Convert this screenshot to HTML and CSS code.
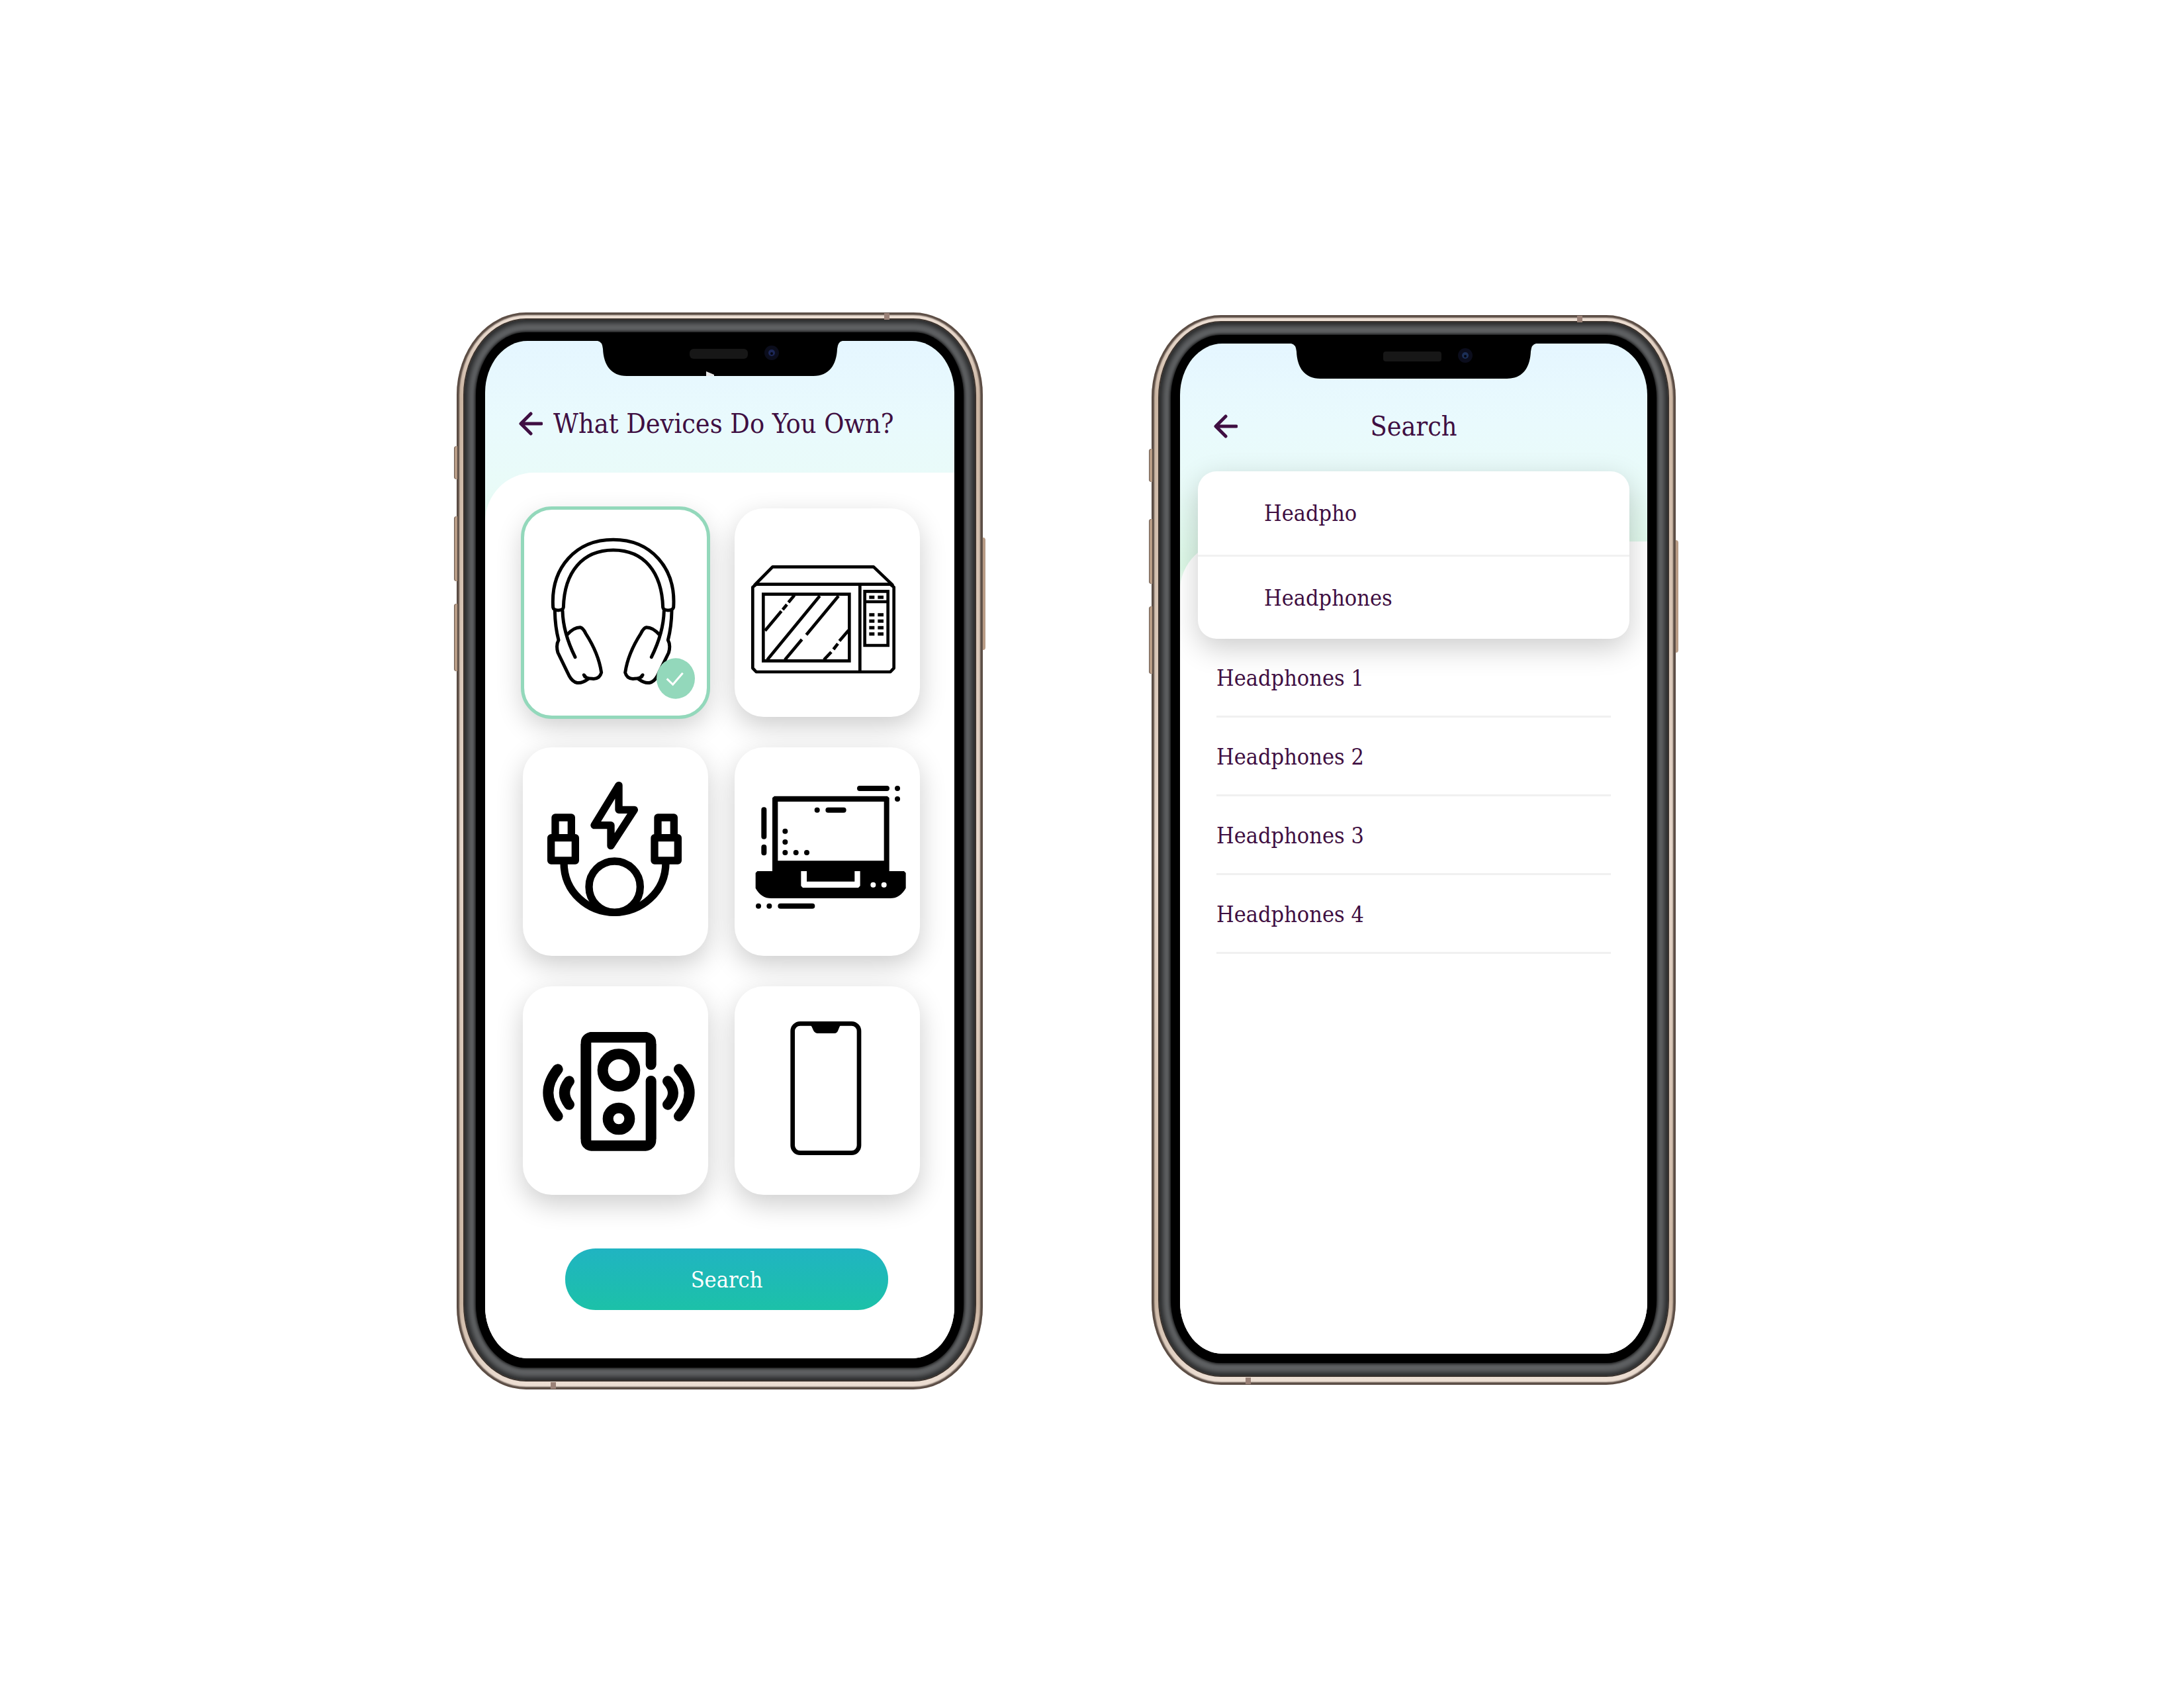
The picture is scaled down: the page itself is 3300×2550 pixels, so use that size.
FILE: index.html
```html
<!DOCTYPE html>
<html lang="en">
<head>
<meta charset="utf-8">
<meta name="viewport" content="width=device-width, initial-scale=1">
<title>Devices</title>
<link rel="stylesheet" href="styles.css">
</head>
<body>
<main class="stage">
  <section class="phone phone-devices">
    <span class="key key-mute"></span><span class="key key-up"></span><span class="key key-down"></span><span class="key key-power"></span>
    <span class="seam seam-top"></span><span class="seam seam-bottom"></span>
    <div class="rim"><div class="bezel"><div class="screen">
      <svg class="notch" viewBox="0 0 370 53" aria-hidden="true">
        <path d="M0 0Q7 1 8 12C9 36 20 53 44 53H326C350 53 361 36 362 12Q363 1 370 0Z"/>
        <rect x="139" y="12" width="88" height="15" rx="6" fill="#171717"/>
        <circle cx="263" cy="18" r="11" fill="#0b0d1c"/><circle cx="263" cy="18" r="5" fill="#1c2757"/><circle cx="263" cy="19" r="2" fill="#05060f"/>
        <path d="M164 46L176 51V53H164Z" fill="#e8e8e8"/>
      </svg>
      <header class="bar">
        <button class="back" type="button" aria-label="Back"><svg viewBox="0 0 36 36"><path d="M18 3L3 18L18 33M4 18H34"/></svg></button>
        <h1 class="title">What Devices Do You Own?</h1>
      </header>
      <div class="panel panel-devices">
        <div class="tiles">
          <button class="tile selected" type="button" aria-pressed="true" aria-label="Headphones">
            <svg viewBox="60 51 840 945">
              <g class="line" stroke-width="15">
                <path d="M197 500C185 320 300 193 470 193C640 193 755 320 743 500Q740 512 718 513Q697 512 695 500C690 340 610 240 470 240C330 240 248 340 244 500Q242 512 220 513Q199 512 197 500Z"/>
                <g id="cup"><path d="M205 515C206 570 212 610 222 648Q209 670 219 705L270 810Q300 865 355 825M240 515C241 560 250 630 297 725M260 624Q290 590 320 590Q333 592 345 618C385 680 408 740 416 795Q408 826 375 823Q342 822 337 806L353 825"/></g>
                <use href="#cup" transform="translate(940 0) scale(-1 1)"/>
              </g>
              <ellipse cx="753" cy="822" rx="87" ry="92" fill="#93d8bb"/>
              <path d="M713 823L740 849L785 797" fill="none" stroke="#fff" stroke-width="9"/>
            </svg>
          </button>
          <button class="tile" type="button" aria-pressed="false" aria-label="Microwave">
            <svg viewBox="60 51 840 945">
              <g class="line" stroke-width="14">
                <path d="M152 397L232 316H690L775 397"/>
                <path d="M158 395H766L782 408V775L766 792H158L142 775V408ZM628 395V792"/>
                <path stroke-linejoin="miter" d="M190 440H580V742H190ZM650 427H755V672H650ZM650 474H755"/>
                <path stroke-linecap="butt" d="M198 605L272 517M278 510L297 487M304 477L331 445M208 737L446 448M385 624L531 448M288 737L365 645M465 737L498 702M508 690L528 664M535 652L577 603"/>
              </g>
              <path d="M670 454H694M709 454H735M670 533H694M709 533H735M670 562H694M709 562H735M670 592H694M709 592H735M670 620H694M709 620H735" fill="none" stroke="#000" stroke-width="15"/>
            </svg>
          </button>
          <button class="tile" type="button" aria-pressed="false" aria-label="Charging cable">
            <svg viewBox="60 54 840 945">
              <g class="line" stroke-width="34">
                <path d="M495 226L384 407H459V500L565 337H495Z"/>
                <path d="M207 372H280V464H207ZM188 464H298V567H188ZM672 372H745V464H672ZM657 464H763V567H657Z"/>
                <circle cx="476" cy="686" r="116"/>
                <path stroke-linecap="butt" d="M246 575C246 712 358 802 476 802S708 712 708 575"/>
              </g>
            </svg>
          </button>
          <button class="tile" type="button" aria-pressed="false" aria-label="Laptop">
            <svg viewBox="60 54 840 945">
              <path fill-rule="evenodd" d="M240 275H752L761 283V615H828L836 623V692Q810 738 765 738H226Q180 738 155 692V623L163 615H231V283ZM256 300V568H737V300ZM361 615V682L369 690H621L629 682V615H604V662H387V615Z"/>
              <g class="line" stroke-width="24">
                <path d="M627 240H750M193 337V458M193 506V532M268 773H412M484 338H554"/>
                <path d="M798 240H798.1M798 288H798.1M434 338H434.1M289 434H289.1M289 483H289.1M289 531H289.1M338 531H338.1M387 531H387.1M168 773H168.1M217 773H217.1"/>
                <path stroke="#fff" d="M688 677H688.1M737 677H737.1"/>
              </g>
            </svg>
          </button>
          <button class="tile" type="button" aria-pressed="false" aria-label="Speaker">
            <svg viewBox="60 57 840 945">
              <g class="line" stroke-width="48">
                <path stroke-linejoin="miter" d="M641 412V288H346V779H641V486"/>
                <circle cx="495" cy="437" r="73"/><circle cx="495" cy="657" r="49"/>
                <path d="M218 433Q132 540 218 645M270 487Q228 540 270 593M768 433Q862 540 768 645M717 487Q765 540 717 593"/>
              </g>
              <path fill="#fff" d="M320 262H375Q322 270 322 318H320ZM667 262H612Q665 270 665 318H667ZM320 805H375Q322 797 322 749H320ZM667 805H612Q665 797 665 749H667Z"/>
            </svg>
          </button>
          <button class="tile" type="button" aria-pressed="false" aria-label="Phone">
            <svg viewBox="60 57 840 945">
              <rect class="line" x="323" y="226" width="301" height="586" rx="34" stroke-width="20"/>
              <path d="M403 230H542Q534 240 530 254Q525 270 512 270H434Q420 268 414 250Q411 240 403 232Z"/>
            </svg>
          </button>
        </div>
        <button class="search" type="button">Search</button>
      </div>
    </div></div></div>
  </section>

  <section class="phone phone-search">
    <span class="key key-mute"></span><span class="key key-up"></span><span class="key key-down"></span><span class="key key-power"></span>
    <span class="seam seam-top"></span><span class="seam seam-bottom"></span>
    <div class="rim"><div class="bezel"><div class="screen">
      <svg class="notch" viewBox="0 0 370 53" aria-hidden="true">
        <path d="M0 0Q7 1 8 12C9 36 20 53 44 53H326C350 53 361 36 362 12Q363 1 370 0Z"/>
        <rect x="139" y="12" width="88" height="15" rx="4" fill="#171717"/>
        <circle cx="263" cy="18" r="11" fill="#0b0d1c"/><circle cx="263" cy="18" r="5" fill="#1c2f57"/><circle cx="263" cy="19" r="2" fill="#05060f"/>
      </svg>
      <header class="bar">
        <button class="back" type="button" aria-label="Back"><svg viewBox="0 0 36 36"><path d="M18 3L3 18L18 33M4 18H34"/></svg></button>
        <h1 class="title">Search</h1>
      </header>
      <div class="panel panel-search">
        <form class="lookup">
          <input class="query" type="text" value="Headpho" aria-label="Search devices">
          <button class="hint" type="button">Headphones</button>
        </form>
        <ul class="results">
          <li><a href="#">Headphones 1</a></li>
          <li><a href="#">Headphones 2</a></li>
          <li><a href="#">Headphones 3</a></li>
          <li><a href="#">Headphones 4</a></li>
        </ul>
      </div>
    </div></div></div>
  </section>
</main>
</body>
</html>
```
FILE: styles.css
```css
:root {
  --ink: #3f0f42;
  --mint: #93d8bb;
  --body-size: 34px;
  --title-size: 41px;
}

* {
  box-sizing: border-box;
}

body {
  margin: 0;
  background: #fff;
  color: var(--ink);
  font-family: "DejaVu Serif Condensed", "DejaVu Serif", serif;
  font-size: var(--body-size);
  line-height: 44px;
}

button,
input {
  margin: 0;
  padding: 0;
  border: 0;
  background: none;
  color: inherit;
  font: inherit;
}

.stage {
  display: grid;
  grid-template-columns: 690fr 795fr 255fr 792fr 768fr;
  align-items: start;
  padding: 472px 0;
}

/* Handset frame: gold edge, grey rim, black bezel */
.phone {
  position: relative;
  padding: 11px 12px 14px;
  border-radius: 105px / 125px;
  background: linear-gradient(#efe1d6, #cbb5a2 8%, #e6d6ca 50%, #cbb5a2 92%, #efe1d6);
  box-shadow: inset 0 0 2px 4px #5a4c44;
}

.phone-devices {
  grid-column: 2;
}

.phone-search {
  grid-column: 4;
  margin-top: 4px;
}

.rim {
  padding: 19px 17px 19px;
  border-radius: 93px / 114px;
  background: #606264;
  box-shadow: inset 0 0 7px 5px #2a2b2c, 0 0 0 2px #3a322d;
}

.bezel {
  padding: 13px 14px 14px;
  border-radius: 76px / 96px;
  background: #000;
  box-shadow: 0 0 5px 1px #000;
}

.screen {
  position: relative;
  display: flex;
  flex-direction: column;
  overflow: hidden;
  border-radius: 64px / 78px;
  background: linear-gradient(#e5f6ff 0, #e9fafd 120px, #e9fbf8 220px, #dcf8e6 340px, #fff 380px);
}

.phone-search .screen {
  aspect-ratio: 706 / 1526;
}

.notch {
  position: absolute;
  top: 0;
  left: calc(50% - 185px);
  width: 370px;
}

.key {
  position: absolute;
  left: -4px;
  width: 5px;
  border-radius: 4px 0 0 4px;
  background: #b89c86;
  box-shadow: inset 1px 0 0 #6a5a50;
}

.key-mute {
  top: 202px;
  height: 50px;
}

.key-up {
  top: 308px;
  height: 98px;
}

.key-down {
  top: 440px;
  height: 102px;
}

.key-power {
  top: 340px;
  right: -4px;
  left: auto;
  height: 170px;
  border-radius: 0 4px 4px 0;
}

.seam {
  position: absolute;
  width: 8px;
  height: 10px;
  background: #9a8177;
}

.seam-top {
  top: 1px;
  right: 141px;
}

.seam-bottom {
  bottom: 1px;
  left: 142px;
}

/* Title bar */
.bar {
  display: flex;
  align-items: center;
  gap: 16px;
  padding: 99px 51px 48px;
}

.phone-search .bar {
  padding-bottom: 148px;
}

.phone-search .title {
  flex: 1;
  margin-right: 52px;
  text-align: center;
}

.title {
  margin: 0;
  font-size: var(--title-size);
  font-weight: 400;
  line-height: 52px;
  white-space: nowrap;
}

.back {
  flex: none;
  width: 36px;
  height: 36px;
}

.back svg {
  display: block;
  fill: none;
  stroke: var(--ink);
  stroke-width: 5;
  stroke-linecap: round;
  stroke-linejoin: round;
}

.panel {
  flex: 1;
  border-top-left-radius: 74px;
  background: #fff;
}

/* Device picker */
.panel-devices {
  padding: 54px 52px 73px 57px;
}

.tiles {
  display: grid;
  grid-template-columns: 1fr 1fr;
  gap: 46px 40px;
}

.tile {
  aspect-ratio: 280 / 315;
  border-radius: 44px;
  background: #fff;
  box-shadow: 0 14px 40px rgba(0, 0, 0, 0.2);
}

.tile.selected {
  outline: 5px solid var(--mint);
  outline-offset: -2px;
}

.tile svg {
  display: block;
  width: 100%;
  height: 100%;
}

.line {
  fill: none;
  stroke: #000;
  stroke-linecap: round;
  stroke-linejoin: round;
}

.search {
  display: block;
  width: calc(100% - 112px);
  height: 93px;
  margin: 81px 48px 0 64px;
  border-radius: 46px;
  background: linear-gradient(#20b4c2, #1cc1a8);
  color: #fff;
}

/* Device search */
.lookup {
  position: relative;
  display: grid;
  grid-template-rows: 126px 127px;
  margin: -106px 27px 0;
  border-radius: 28px;
  background: #fff;
  box-shadow: 0 14px 44px rgba(0, 0, 0, 0.2);
}

.query,
.hint {
  width: 100%;
  padding-left: 100px;
  text-align: left;
}

.query {
  outline: 0;
}

.hint {
  border-top: 3px solid #f1f1f1;
}

.results {
  margin: 0;
  padding: 0 55px;
  list-style: none;
}

.results li {
  padding: 37px 0 35px;
  border-bottom: 3px solid #f0f0f0;
}

.results a {
  position: relative;
  display: block;
  color: inherit;
  text-decoration: none;
}
```
